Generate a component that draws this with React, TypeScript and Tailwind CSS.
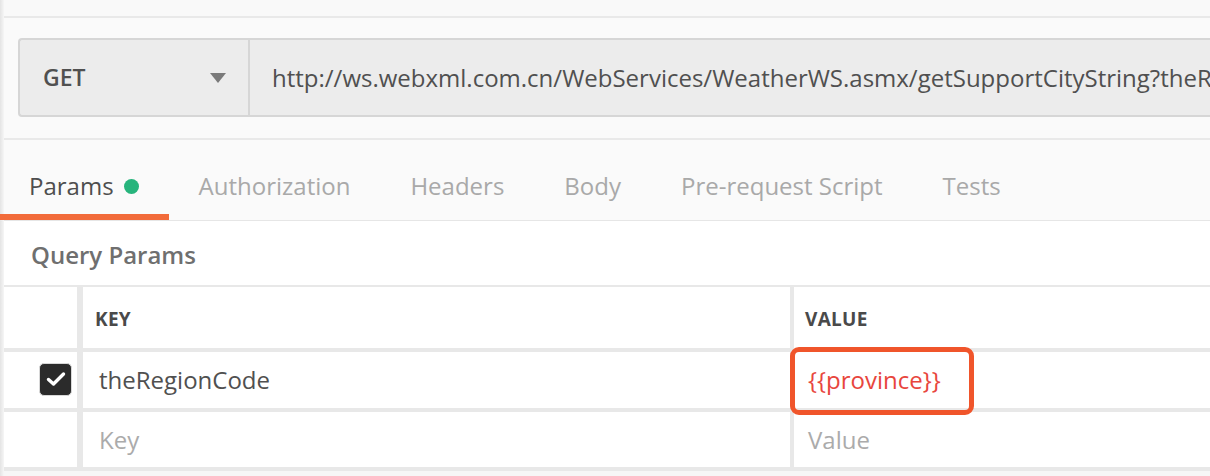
import React from "react";

const tabs = ["Authorization", "Headers", "Body", "Pre-request Script", "Tests"];

export default function App() {
  return (
    <div
      className="w-[1210px] h-[476px] overflow-hidden flex bg-[#fafafa]"
      style={{ fontFamily: '"Open Sans", "Liberation Sans", sans-serif' }}
    >
      <div className="w-[4px] shrink-0 bg-gradient-to-r from-[#e4e4e4] to-[#f6f6f6]" />
      <div className="flex-1 flex flex-col min-w-0">
        {/* top strip */}
        <div className="h-[16px] bg-[#f9f9f9]" />
        <div className="h-[2px] bg-[#e9e9e9]" />
        {/* URL bar */}
        <div className="h-[120px] bg-[#fafafa] pt-[20px] pl-[14px]">
          <div className="h-[79px] flex border-2 border-r-0 border-[#d6d6d6] rounded-l-[4px] bg-[#ececec]">
            <div className="w-[230px] shrink-0 flex items-center justify-between pl-[23px] pr-[22px] border-r-2 border-[#d6d6d6]">
              <span className="text-[23px] font-semibold text-[#505050]">GET</span>
              <svg width="16" height="10" viewBox="0 0 16 10">
                <polygon points="0,0 16,0 8,10" fill="#7a7a7a" />
              </svg>
            </div>
            <div className="flex-1 min-w-0 flex items-center pl-[22px] whitespace-nowrap overflow-hidden">
              <span className="text-[24px] text-[#505050]">
                http://ws.webxml.com.cn/WebServices/WeatherWS.asmx/getSupportCityString?theRegionCode={"{{province}}"}
              </span>
            </div>
          </div>
        </div>
        <div className="h-[2px] bg-[#e9e9e9]" />
        {/* tabs */}
        <div className="h-[80px] flex bg-[#fafafa]">
          <div className="h-full flex items-center pt-[18px] pr-[30px] border-b-[6px] border-[#f26b3a] -ml-[4px] pl-[29px]">
            <span className="text-[24px] text-[#4e4e4e]">Params</span>
            <span className="ml-[10px] w-[15px] h-[15px] rounded-full bg-[#27b47c]" />
          </div>
          {tabs.map((t) => (
            <div
              key={t}
              className="h-full flex items-center pt-[18px] px-[30px] border-b-[6px] border-transparent"
            >
              <span className="text-[24px] text-[#a9a9a9] whitespace-nowrap">{t}</span>
            </div>
          ))}
        </div>
        <div className="h-[1px] bg-[#e6e6e6]" />
        {/* query params */}
        <div className="h-[64px] bg-white flex items-center pl-[27px] pt-[4px]">
          <span className="text-[24px] font-semibold text-[#6f6f6f]">Query Params</span>
        </div>
        <div className="h-[2px] bg-[#e8e8e8]" />
        {/* header row */}
        <div className="h-[61px] flex bg-white">
          <div className="w-[73px] shrink-0" />
          <div className="w-[6px] shrink-0 bg-[#e8e8e8]" />
          <div className="w-[707px] shrink-0 flex items-center pl-[12px] pt-[4px]">
            <span className="text-[19px] tracking-[0.3px] font-bold text-[#4a4a4a]">KEY</span>
          </div>
          <div className="w-[4px] shrink-0 bg-[#e8e8e8]" />
          <div className="flex-1 flex items-center pl-[11px] pt-[4px]">
            <span className="text-[19px] tracking-[0.3px] font-bold text-[#4a4a4a]">VALUE</span>
          </div>
        </div>
        <div className="h-[4px] bg-[#e8e8e8]" />
        {/* row 1 */}
        <div className="h-[56px] flex bg-white">
          <div className="w-[73px] shrink-0 flex items-center justify-end pr-[5px] pb-[2px]">
            <div className="w-[33px] h-[33px] rounded-[5px] bg-[#2b2b2b] border border-[#d8d8d8] flex items-center justify-center">
              <svg width="20" height="16" viewBox="0 0 20 16">
                <path d="M2.5 8.5 L7.5 13 L17.5 3" fill="none" stroke="#fff" strokeWidth="3.4" strokeLinecap="round" strokeLinejoin="round" />
              </svg>
            </div>
          </div>
          <div className="w-[6px] shrink-0 bg-[#e8e8e8]" />
          <div className="w-[707px] shrink-0 flex items-center pl-[16px]">
            <span className="text-[24px] text-[#505050]">theRegionCode</span>
          </div>
          <div className="w-[4px] shrink-0 bg-[#e8e8e8]" />
          <div className="flex-1 flex items-center pl-[14px] relative">
            <span className="text-[24px] text-[#e8463d]">{"{{province}}"}</span>
            <div className="absolute left-[-4px] top-[-5px] w-[184px] h-[68px] border-[5px] border-[#f0552b] rounded-[9px]" />
          </div>
        </div>
        <div className="h-[4px] bg-[#e8e8e8]" />
        {/* row 2 */}
        <div className="h-[55px] flex bg-white">
          <div className="w-[73px] shrink-0" />
          <div className="w-[6px] shrink-0 bg-[#e8e8e8]" />
          <div className="w-[707px] shrink-0 flex items-center pl-[16px]">
            <span className="text-[24px] text-[#ababab]">Key</span>
          </div>
          <div className="w-[4px] shrink-0 bg-[#e8e8e8]" />
          <div className="flex-1 flex items-center pl-[14px]">
            <span className="text-[24px] text-[#ababab]">Value</span>
          </div>
        </div>
        <div className="h-[4px] bg-[#e8e8e8]" />
        <div className="flex-1 bg-[#f6f6f6]" />
      </div>
    </div>
  );
}
